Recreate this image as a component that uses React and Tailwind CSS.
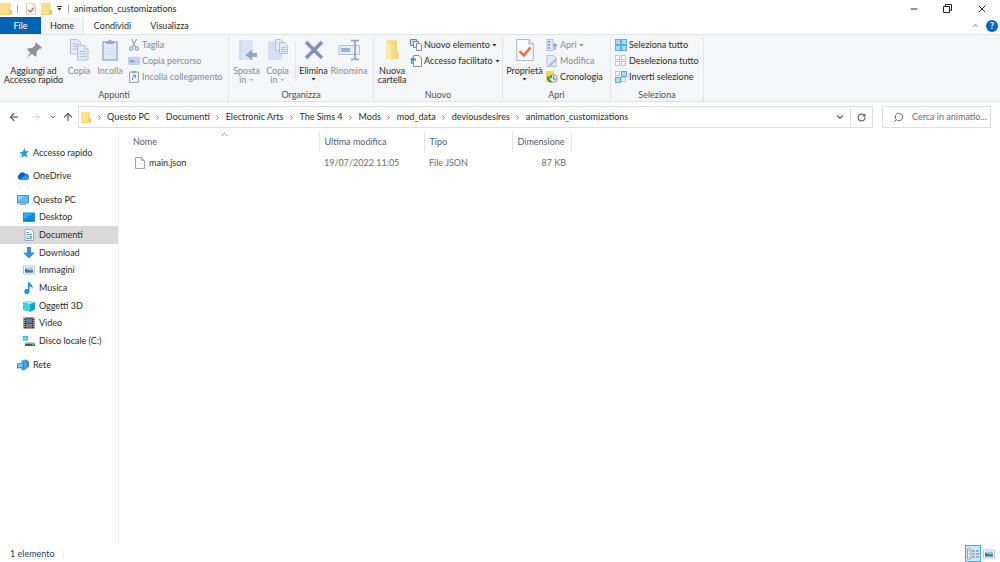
import React, { useState } from 'react';
import { ArrowLeft, ArrowRight, ArrowUp, ChevronDown, ChevronRight, ChevronUp, Minus, RotateCw, Search, X } from 'lucide-react';

const FolderIcon = ({ className = 'size-3' }) => (
  <svg viewBox="0 0 12 14" preserveAspectRatio="none" className={className}>
    <path d="M0 1h10v12H0z" fill="#ffe08a" />
    <path d="M9 1h1.500v7H9z" fill="#fcd468" />
    <path d="M8.500 8h3.500v5H8.500z" fill="#f5cb5c" />
    <path d="M0 12h12v1H0z" fill="#f9d470" />
  </svg>
);

const CheckPageIcon = ({ className = 'size-3' }) => (
  <svg viewBox="0 0 16 20" className={className}>
    <path d="M.5.5h11l4 4v15H.5z" fill="#fcfcfc" stroke="#b4b7bb" />
    <path d="M11.5.5v4h4" fill="#eee" stroke="#b4b7bb" />
    <path d="M3 11l4 4 6-7.5" fill="none" stroke="#f26a2e" strokeWidth="2.2" />
  </svg>
);

const PinIcon = () => (
  <svg viewBox="0 0 20 20" className="size-5">
    <path d="M12 2.500l6 5-1.200 1.300-1.300-.100-3 3.100.200 3.500-1.500 1.500-3.500-3-4.700 3.900L6.200 12.500 3 9.500l1.500-1.300 3.700-.200 3.200-3-.500-1.300z" fill="#8c949b" />
  </svg>
);

const CopyIcon = () => (
  <svg viewBox="0 0 20 22" className="h-[22px] w-5" fill="#e4ebf7" stroke="#b0bfda">
    <path d="M1.500.500h7l3.500 3.500v11H1.500z" />
    <path d="M3.500 5h6M3.500 7.500h5M3.500 10h5" />
    <path d="M8.500 6.500h7l3.500 3.500v11H8.500z" />
    <path d="M15.500 6.500V10H19M10.500 12.500h6.500M10.500 15h6.500M10.500 17.500h6.500" />
  </svg>
);

const PasteIcon = () => (
  <svg viewBox="0 0 18 22" className="h-[22px] w-[18px]">
    <path d="M2 3h14v18H2z" fill="#dfe9f9" stroke="#9dafd2" strokeWidth="1.500" />
    <path d="M5 2h2.500a1.500 1.500 0 013 0H13v3H5z" fill="#9aa7be" />
    <path d="M4.500 9h9M4.500 12h9M4.500 15h9" stroke="#cddaf0" />
  </svg>
);

const ScissorsIcon = () => (
  <svg viewBox="0 0 12 12" className="size-3" fill="none" stroke="#92a8cf">
    <path d="M3.500 0l4 8M8.500 0l-4 8" stroke="#9ba5b5" strokeWidth="1.200" />
    <circle cx="3.200" cy="9.500" r="1.700" strokeWidth="1.200" />
    <circle cx="8.800" cy="9.500" r="1.700" strokeWidth="1.200" />
  </svg>
);

const PathIcon = () => (
  <svg viewBox="0 0 12 12" className="size-3">
    <path d="M.500 2.500h11v7H.500z" fill="#c9d7ee" stroke="#bccbe4" />
    <path d="M2 4.500l1 3 1-2 1 2 1-3M7 7h1M9 7h1.500" fill="none" stroke="#7f99c4" />
  </svg>
);

const PasteLinkIcon = () => (
  <svg viewBox="0 0 12 12" className="size-3">
    <path d="M1.500 1h9v10.500h-9z" fill="#edf2fb" stroke="#92a4c6" />
    <path d="M4 0h4v2H4z" fill="#8e9cb5" />
    <path d="M4.500 9V7l2.500-2.500M5 4.200h2.500v2.500" fill="none" stroke="#6681b0" />
  </svg>
);

const MoveIcon = () => (
  <svg viewBox="0 0 20 22" className="h-[22px] w-5">
    <path d="M2 1h14v20H2z" fill="#d9e4f5" />
    <path d="M2 1h3v20H2z" fill="#cfdcf1" />
    <path d="M20 14h-5v-3.500L8.500 16l6.500 5.500V18h5z" fill="#94a7ca" />
  </svg>
);

const CopyToIcon = () => (
  <svg viewBox="0 0 20 22" className="h-[22px] w-5">
    <path d="M0 2h14v19H0z" fill="#d3dff2" />
    <g fill="#e2eaf7" stroke="#b0c0dc">
      <path d="M7.500.500h5l2 2v9h-7z" />
      <path d="M11.500 3.500h5l3 3v8h-8z" />
      <path d="M13 8.500h5M13 10.500h5M13 12.500h5" />
    </g>
  </svg>
);

const DeleteIcon = () => (
  <svg viewBox="0 0 20 22" className="h-[22px] w-5">
    <path d="M2 3l16 16M18 3L2 19" stroke="#7f93b8" strokeWidth="3.500" />
  </svg>
);

const RenameIcon = () => (
  <svg viewBox="0 0 22 22" className="size-[22px]">
    <path d="M1 6.500h20.500v9H1z" fill="#e6eefa" stroke="#b3c3de" />
    <path d="M3 9h9v4H3z" fill="#9bb1d8" />
    <path d="M13 1.500h2.500l1.500 1 1.500-1H21M13 20.500h2.500l1.500-1 1.500 1H21M17 2.500v17" fill="none" stroke="#8a9bb8" strokeWidth="1.500" />
  </svg>
);

const NewFolderIcon = () => (
  <svg viewBox="0 0 16 22" className="h-[22px] w-4">
    <path d="M2 1.500h11v10l1.500 1V20H2z" fill="#fad673" />
    <path d="M2 1.500l5 3V21l-5-2z" fill="#ffe9a5" />
    <path d="M7 4.500h4v16L7 21z" fill="#fcdd84" />
  </svg>
);

const NewItemIcon = () => (
  <svg viewBox="0 0 12 12" className="size-3">
    <path d="M.500.500h6v6h-6z" fill="#c5e3f4" stroke="#4c8ab0" />
    <path d="M3.500 2.500h5v6h-5z" fill="#e9f1f6" stroke="#6d8ca0" />
    <path d="M6.500 4.500H10l1.500 1.500v5.500h-5z" fill="#fff" stroke="#858c92" />
  </svg>
);

const EasyAccessIcon = () => (
  <svg viewBox="0 0 12 12" className="size-3">
    <path d="M3.500.500h5.500l2.500 2.500v8.500h-8z" fill="#fff" stroke="#8a8f94" />
    <path d="M0 4.500L3 2v1.500h3v2H2.500V9H1V5z" fill="#3d95d0" />
  </svg>
);

const OpenIcon = () => (
  <svg viewBox="0 0 12 12" className="size-3">
    <path d="M1 .500h6v11H1z" fill="#dce6f5" stroke="#b4c4df" />
    <path d="M2 2h2v2H2zM2 5h2v2H2zM2 8h2v2H2z" fill="#8da5d0" />
    <path d="M9 11V5M7 7l2-2 2 2" fill="none" stroke="#8da2c5" strokeWidth="1.500" />
  </svg>
);

const EditIcon = () => (
  <svg viewBox="0 0 12 12" className="size-3">
    <path d="M1 .500h6.500L10 3v8.500H1z" fill="#e3ebf8" stroke="#b0c1de" />
    <path d="M3 10l7-7 1.500 1.500-7 6.500H3z" fill="#a5b8da" />
  </svg>
);

const HistoryIcon = () => (
  <svg viewBox="0 0 12 12" className="size-3">
    <path d="M0 0h8v11H0z" fill="#f8d65f" />
    <circle cx="7.500" cy="7.500" r="3.800" fill="#e8ece8" stroke="#8e9895" />
    <path d="M7.500 5v3H10" fill="none" stroke="#777" />
    <path d="M2 5.500A5 5 0 005.500 11" fill="none" stroke="#3fa22f" strokeWidth="2" />
    <path d="M5.500 3.500L1.500 7h4.500z" fill="#3fa22f" />
  </svg>
);

// fill flags are listed clockwise from the top left square
const SquaresIcon = ({ filled }) => (
  <svg viewBox="0 0 12 12" className="size-3">
    {[[0, 0], [6, 0], [6, 6], [0, 6]].map(([x, y], i) => (
      <rect
        key={i}
        x={x + 0.5}
        y={y + 0.5}
        width={filled[i] ? 5 : 4}
        height={filled[i] ? 5 : 4}
        fill={filled[i] ? '#a8dafc' : '#fbfbfb'}
        stroke={filled[i] ? '#5aaeea' : '#c3c6c9'}
      />
    ))}
  </svg>
);

const StarIcon = () => (
  <svg viewBox="0 0 12 12" className="size-3">
    <path d="M7.500 1l1 3.200 3.300-.200-2.500 2.700 1.500 3.600-3.500-1.400-2.800 2.100.500-3.600-2.500-2.200 3.400-.600z" fill="#2b98e8" />
    <path d="M2 10l2.500-2" stroke="#7fc0f0" />
  </svg>
);

const CloudIcon = () => (
  <svg viewBox="0 0 13 12" className="size-3">
    <path d="M3 10a3 3 0 01-.500-5.600A3.800 3.800 0 019.400 4 3 3 0 0110.500 10z" fill="#0b62bd" />
    <path d="M3 10l5-4.500a3 3 0 014.800 2.300A2.200 2.200 0 0110.800 10z" fill="#2a9be8" />
  </svg>
);

const PcIcon = () => (
  <svg viewBox="0 0 12 12" className="size-3">
    <path d="M.500 1.500h11V9H.500z" fill="#54bdf5" stroke="#4a93c2" />
    <path d="M1 2h6L1 8z" fill="#8ad6fb" />
    <path d="M3 10.500h6" stroke="#8a9aa5" />
  </svg>
);

const DesktopIcon = () => (
  <svg viewBox="0 0 12 12" className="size-3">
    <path d="M0 1.500h12v9H0z" fill="#108ae0" />
    <path d="M1 2.500h10L1 8z" fill="#33adf5" />
    <path d="M0 10h12" stroke="#0c65ac" />
  </svg>
);

const DocumentIcon = () => (
  <svg viewBox="0 0 12 12" className="size-3">
    <path d="M2 .500h6L10.500 3v8.500H2z" fill="#f8fbfd" stroke="#9ba8b3" />
    <path d="M3.500 3.500H6M3.500 5.500h5.500M3.500 9.500H6" stroke="#4d9ed6" />
    <path d="M6.500 7h2.500v3H6.500zM3.500 7H5v1.500H3.500z" fill="#63b2e8" />
  </svg>
);

const DownloadIcon = () => (
  <svg viewBox="0 0 12 12" className="size-3">
    <path d="M4 0h4v5.500h4l-6 6-6-6h4z" fill="#3a90dc" />
  </svg>
);

const PictureIcon = () => (
  <svg viewBox="0 0 12 12" className="size-3">
    <path d="M.500 2h11v8H.500z" fill="#fff" stroke="#bcc1c6" />
    <path d="M2 3.500h8v3H2z" fill="#90c9f0" />
    <path d="M2 5l3 1.200h5v2.300H2z" fill="#34658a" />
    <path d="M2 7.500h8v1H2z" fill="#5b8fc0" />
  </svg>
);

const MusicIcon = () => (
  <svg viewBox="0 0 12 12" className="size-3">
    <path d="M5 0h1.300c.500 2 4.200 2.500 3.200 7C9 5.500 8 4.500 6.500 4.300v5A2.600 2.500 0 115 7.200z" fill="#1597ea" />
  </svg>
);

const CubeIcon = () => (
  <svg viewBox="0 0 12 12" className="size-3">
    <path d="M0 2L6 .500l6 1.500-5 2z" fill="#9deaf5" />
    <path d="M0 2l7 2v8L0 10z" fill="#41cfe4" />
    <path d="M12 2L7 4v8l5-2.500z" fill="#12a5c4" />
  </svg>
);

const VideoIcon = () => (
  <svg viewBox="0 0 12 12" className="size-3">
    <path d="M.500.500h11v11H.500z" fill="#3b3d42" />
    <path d="M3 1.500h6v4H3z" fill="#4b7fc2" />
    <path d="M3 6.500h6v4H3z" fill="#a97a48" />
    <path d="M3 4l3-1.500L9 5v.500H3zM5 8l4-1v3.500H6z" fill="#6f72b8" />
    <path d="M1.700 1v10M10.300 1v10" stroke="#d8d8d8" strokeDasharray="1 1" />
  </svg>
);

const DiskIcon = () => (
  <svg viewBox="0 0 12 12" className="size-3">
    <path d="M0 1h2.300v2H0zM2.800 1H5v2H2.800zM0 3.500h2.300v2H0zM2.800 3.500H5v2H2.800z" fill="#19b2e8" />
    <path d="M3 7h8l1 1.500H2z" fill="#c9cdd0" />
    <path d="M2 8.500h10V11H2z" fill="#56595c" />
    <path d="M9 9.800h2" stroke="#74e08a" />
  </svg>
);

const NetworkIcon = () => (
  <svg viewBox="0 0 12 12" className="size-3">
    <path d="M4.500 1.500L9 .500l3 2.500v5L7 11.500 4.500 8z" fill="#4fa3da" />
    <path d="M9 .500l3 2.500v5L9.500 7z" fill="#3a88c0" />
    <path d="M0 4.500L7 3.500v5L0 9.500z" fill="#2f86c6" />
    <path d="M1 5.300l5-.700v3L1 8.400z" fill="#7cc8f4" />
    <path d="M3 9.500l4-.500 1 1.500-2 1z" fill="#4a92c6" />
  </svg>
);

const FileIcon = () => (
  <svg viewBox="0 0 10 12" className="h-3 w-[10px]">
    <path d="M.500.500h6l3 3v8h-9z" fill="#fafafa" stroke="#a5a5a5" />
    <path d="M6.500.500v3h3" fill="none" stroke="#a5a5a5" />
  </svg>
);

const Caret = ({ className = '' }) => (
  <svg viewBox="0 0 5 3" className={`inline-block h-[3px] w-[5px] ${className}`}>
    <path d="M.500 0h4L2.500 2.500z" fill="currentColor" />
  </svg>
);

const BigButton = ({ icon, children, className = '', disabled }) => (
  <button
    type="button"
    disabled={disabled}
    className={`flex flex-col items-center text-center leading-[9px] whitespace-nowrap disabled:text-[#858b92] ${className}`}
  >
    <span className="mb-[3px] flex h-[26px] items-center justify-center">{icon}</span>
    {children}
  </button>
);

const SmallButton = ({ icon, children, disabled, caret }) => (
  <button
    type="button"
    disabled={disabled}
    className="flex h-4 items-center gap-[2px] whitespace-nowrap disabled:text-[#858b92]"
  >
    {icon}
    {children}
    {caret && <Caret />}
  </button>
);

const Group = ({ label, className, children }) => (
  <section aria-label={label} className={`flex shrink-0 flex-col border-r border-[#e3e5e8] ${className}`}>
    <div className="flex h-[52px] items-start">{children}</div>
    <div className="text-center leading-3 text-[#4f5358]">{label}</div>
  </section>
);

const PATH = ['Questo PC', 'Documenti', 'Electronic Arts', 'The Sims 4', 'Mods', 'mod_data', 'deviousdesires', 'animation_customizations'];

const PC_ITEMS = [
  { name: 'Desktop', icon: <DesktopIcon /> },
  { name: 'Documenti', icon: <DocumentIcon /> },
  { name: 'Download', icon: <DownloadIcon /> },
  { name: 'Immagini', icon: <PictureIcon /> },
  { name: 'Musica', icon: <MusicIcon /> },
  { name: 'Oggetti 3D', icon: <CubeIcon /> },
  { name: 'Video', icon: <VideoIcon /> },
  { name: 'Disco locale (C:)', icon: <DiskIcon /> },
];

const NavItem = ({ icon, name, nested, active, onClick }) => (
  <a
    href="#"
    onClick={onClick}
    className={`flex min-h-[17px] items-center gap-1 whitespace-nowrap ${nested ? 'pl-[23px]' : 'pl-[17px]'} ${active ? 'bg-[#d9d9d9]' : ''}`}
  >
    {icon}
    {name}
  </a>
);

const App = () => {
  const [selected, setSelected] = useState('Documenti');
  const [query, setQuery] = useState('');

  return (
    <div className="flex min-h-screen flex-col bg-white font-['Lato',sans-serif] text-[9px] leading-3 text-[#2b2b2b]">
      {/* Title bar */}
      <header className="flex h-[17px] items-center">
        <FolderIcon className="h-[14px] w-3" />
        <span className="ml-[5px] h-2 w-px bg-[#aaa]" />
        <button type="button" aria-label="Proprietà" className="ml-2"><CheckPageIcon className="h-3 w-[10px]" /></button>
        <button type="button" aria-label="Nuova cartella" className="ml-[5px]"><FolderIcon className="h-[14px] w-[11px]" /></button>
        <button type="button" aria-label="Personalizza" className="ml-[5px] flex flex-col items-center gap-px">
          <span className="h-px w-[5px] bg-[#333]" />
          <Caret />
        </button>
        <span className="ml-[6px] h-2 w-px bg-[#aaa]" />
        <h1 className="ml-[5px]">animation_customizations</h1>
        <div className="ml-auto flex items-center gap-6 pr-3">
          <button type="button" aria-label="Riduci a icona"><Minus size={10} strokeWidth={2.500} /></button>
          <button type="button" aria-label="Ripristina">
            <svg viewBox="0 0 9 9" className="size-[9px]" fill="none" stroke="#222">
              <path d="M.500 2.500h6v6h-6zM2.500 2.500v-2h6v6h-2" />
            </svg>
          </button>
          <button type="button" aria-label="Chiudi"><X size={12} strokeWidth={2} /></button>
        </div>
      </header>

      {/* Ribbon tabs */}
      <nav className="flex h-[17px] items-stretch">
        <button type="button" className="w-[41px] bg-[#0063b1] text-white">File</button>
        <button type="button" className="w-[43px] border-r border-[#e3e5e8] bg-[#f4f6f8]">Home</button>
        <button type="button" className="w-[57px]">Condividi</button>
        <button type="button" className="w-[57px]">Visualizza</button>
        <div className="ml-auto flex items-center gap-[6px] pr-[2px]">
          <button type="button" aria-label="Riduci la barra multifunzione"><ChevronUp size={9} strokeWidth={3} color="#b5b5b5" /></button>
          <button type="button" aria-label="Guida" className="flex size-3 items-center justify-center rounded-full bg-[#0067c0] font-bold text-white">?</button>
        </div>
      </nav>

      {/* Ribbon */}
      <div className="flex border-y border-[#e0e2e5] bg-[#f4f6f8] pt-[2px]">
        <Group label="Appunti" className="w-[229px]">
          <BigButton className="w-[67px]" icon={<PinIcon />}>
            <span>Aggiungi ad</span>
            <span>Accesso rapido</span>
          </BigButton>
          <BigButton className="w-6" icon={<CopyIcon />} disabled>Copia</BigButton>
          <BigButton className="ml-1 w-[30px]" icon={<PasteIcon />} disabled>Incolla</BigButton>
          <div className="ml-[3px]">
            <SmallButton icon={<ScissorsIcon />} disabled>Taglia</SmallButton>
            <SmallButton icon={<PathIcon />} disabled>Copia percorso</SmallButton>
            <SmallButton icon={<PasteLinkIcon />} disabled>Incolla collegamento</SmallButton>
          </div>
        </Group>

        <Group label="Organizza" className="w-[145px]">
          <BigButton className="ml-[2px] w-[31px]" icon={<MoveIcon />} disabled>
            <span>Sposta</span>
            <span>in <Caret className="align-middle text-[#b5b8bc]" /></span>
          </BigButton>
          <BigButton className="w-[31px]" icon={<CopyToIcon />} disabled>
            <span>Copia</span>
            <span>in <Caret className="align-middle text-[#b5b8bc]" /></span>
          </BigButton>
          <span className="mx-[2px] mt-1 h-10 w-px bg-[#e3e5e8]" />
          <BigButton className="w-[31px]" icon={<DeleteIcon />}>
            <span>Elimina</span>
            <Caret className="mt-[3px]" />
          </BigButton>
          <BigButton className="w-10" icon={<RenameIcon />} disabled>Rinomina</BigButton>
        </Group>

        <Group label="Nuovo" className="w-[129px]">
          <BigButton className="w-9" icon={<NewFolderIcon />}>
            <span>Nuova</span>
            <span>cartella</span>
          </BigButton>
          <div>
            <SmallButton icon={<NewItemIcon />} caret>Nuovo elemento</SmallButton>
            <SmallButton icon={<EasyAccessIcon />} caret>Accesso facilitato</SmallButton>
          </div>
        </Group>

        <Group label="Apri" className="w-[108px]">
          <BigButton className="w-[43px]" icon={<CheckPageIcon className="h-[22px] w-[18px]" />}>
            <span>Proprietà</span>
            <Caret className="mt-[3px]" />
          </BigButton>
          <div>
            <SmallButton icon={<OpenIcon />} disabled caret>Apri</SmallButton>
            <SmallButton icon={<EditIcon />} disabled>Modifica</SmallButton>
            <SmallButton icon={<HistoryIcon />}>Cronologia</SmallButton>
          </div>
        </Group>

        <Group label="Seleziona" className="w-[93px]">
          <div className="ml-1">
            <SmallButton icon={<SquaresIcon filled={[1, 1, 1, 1]} />}>Seleziona tutto</SmallButton>
            <SmallButton icon={<SquaresIcon filled={[0, 0, 0, 0]} />}>Deseleziona tutto</SmallButton>
            <SmallButton icon={<SquaresIcon filled={[0, 1, 0, 1]} />}>Inverti selezione</SmallButton>
          </div>
        </Group>
      </div>

      {/* Address bar */}
      <div className="flex items-center pt-1 pr-[9px] pb-[3px] pl-2 text-[#666]">
        <button type="button" aria-label="Indietro"><ArrowLeft size={12} strokeWidth={2.500} /></button>
        <button type="button" aria-label="Avanti" className="ml-[10px] text-[#d2d2d2]"><ArrowRight size={12} /></button>
        <button type="button" aria-label="Percorsi recenti" className="ml-[7px]"><ChevronDown size={8} strokeWidth={3} /></button>
        <button type="button" aria-label="Su" className="ml-[5px]"><ArrowUp size={12} strokeWidth={2.500} /></button>
        <div className="ml-1 flex h-[22px] flex-1 items-center border border-[#dfdfdf] pl-[2px]">
          <FolderIcon className="h-[13px] w-[10px]" />
          {PATH.map((part) => (
            <React.Fragment key={part}>
              <span className="flex w-4 justify-center"><ChevronRight size={7} strokeWidth={3} /></span>
              <a href="#" className="whitespace-nowrap text-[#2b2b2b]">{part}</a>
            </React.Fragment>
          ))}
          <button type="button" aria-label="Percorsi precedenti" className="ml-auto px-[5px]"><ChevronDown size={10} strokeWidth={3} /></button>
          <button type="button" aria-label="Aggiorna" className="flex h-full w-[22px] items-center justify-center border-l border-[#dfdfdf]"><RotateCw size={9} strokeWidth={3} /></button>
        </div>
        <label className="ml-[9px] flex h-[22px] w-[109px] items-center border border-[#dfdfdf] pl-[10px]">
          <Search size={11} className="shrink-0 -scale-x-100" />
          <input
            type="text"
            aria-label="Cerca"
            value={query}
            onChange={(e) => setQuery(e.target.value)}
            placeholder="Cerca in animatio..."
            className="ml-2 min-w-0 flex-1 outline-none placeholder:text-[#6d6d6d]"
          />
        </label>
      </div>

      <div className="flex flex-1">
        {/* Navigation pane */}
        <aside className="w-[119px] shrink-0 border-r border-[#f2f2f2] pt-[13px]">
          <NavItem icon={<StarIcon />} name="Accesso rapido" />
          <div className="mt-[6px] mb-[7px]"><NavItem icon={<CloudIcon />} name="OneDrive" /></div>
          <div className="grid h-[159px] auto-rows-fr">
            <NavItem icon={<PcIcon />} name="Questo PC" />
            {PC_ITEMS.map((item) => (
              <NavItem
                key={item.name}
                {...item}
                nested
                active={selected === item.name}
                onClick={() => setSelected(item.name)}
              />
            ))}
          </div>
          <div className="mt-[6px]"><NavItem icon={<NetworkIcon />} name="Rete" /></div>
        </aside>

        {/* File list */}
        <main className="flex-1">
          <table className="w-[452px] table-fixed text-left">
            <colgroup>
              <col className="w-[200px]" />
              <col className="w-[105px]" />
              <col className="w-[88px]" />
              <col className="w-[59px]" />
            </colgroup>
            <thead>
              <tr className="h-[21px] text-[#4c607a] *:border-r *:border-[#e5e5e5] *:font-normal">
                <th className="relative pl-[14px]">
                  Nome
                  <ChevronUp size={9} className="absolute -top-px left-[101px] text-[#777]" />
                </th>
                <th className="pl-[5px]">Ultima modifica</th>
                <th className="pl-[5px]">Tipo</th>
                <th className="pl-[5px]">Dimensione</th>
              </tr>
            </thead>
            <tbody>
              <tr className="h-[21px] text-[#6d6d6d]">
                <td className="pl-4 text-[#2b2b2b]">
                  <span className="flex items-center gap-1"><FileIcon />main.json</span>
                </td>
                <td className="pl-[5px]">19/07/2022 11:05</td>
                <td className="pl-[5px]">File JSON</td>
                <td className="pr-[5px] text-right">87 KB</td>
              </tr>
            </tbody>
          </table>
        </main>
      </div>

      {/* Status bar */}
      <footer className="flex h-[17px] items-center pr-[3px] pl-[10px] text-[#2b3f66]">
        <span>1 elemento</span>
        <span className="ml-2 h-2 w-px bg-[#eee]" />
        <button type="button" aria-label="Dettagli" className="ml-auto flex h-[17px] w-4 items-center justify-center border border-[#3fa9e0] bg-[#cce8f6]">
          <svg viewBox="0 0 12 12" className="size-3">
            <path d="M.500 1h3.500v10H.500z" fill="#fff" stroke="#9ba5ab" />
            <path d="M1.500 3h1.500M1.500 6h1.500M1.500 9h1.500" stroke="#d56f62" />
            <path d="M5 3h3M9 3h3M5 6h3M9 6h3M5 9h3M9 9h3" stroke="#6c7f8b" />
          </svg>
        </button>
        <button type="button" aria-label="Icone grandi" className="px-[2px]"><PictureIcon /></button>
      </footer>
    </div>
  );
};

export default App;
